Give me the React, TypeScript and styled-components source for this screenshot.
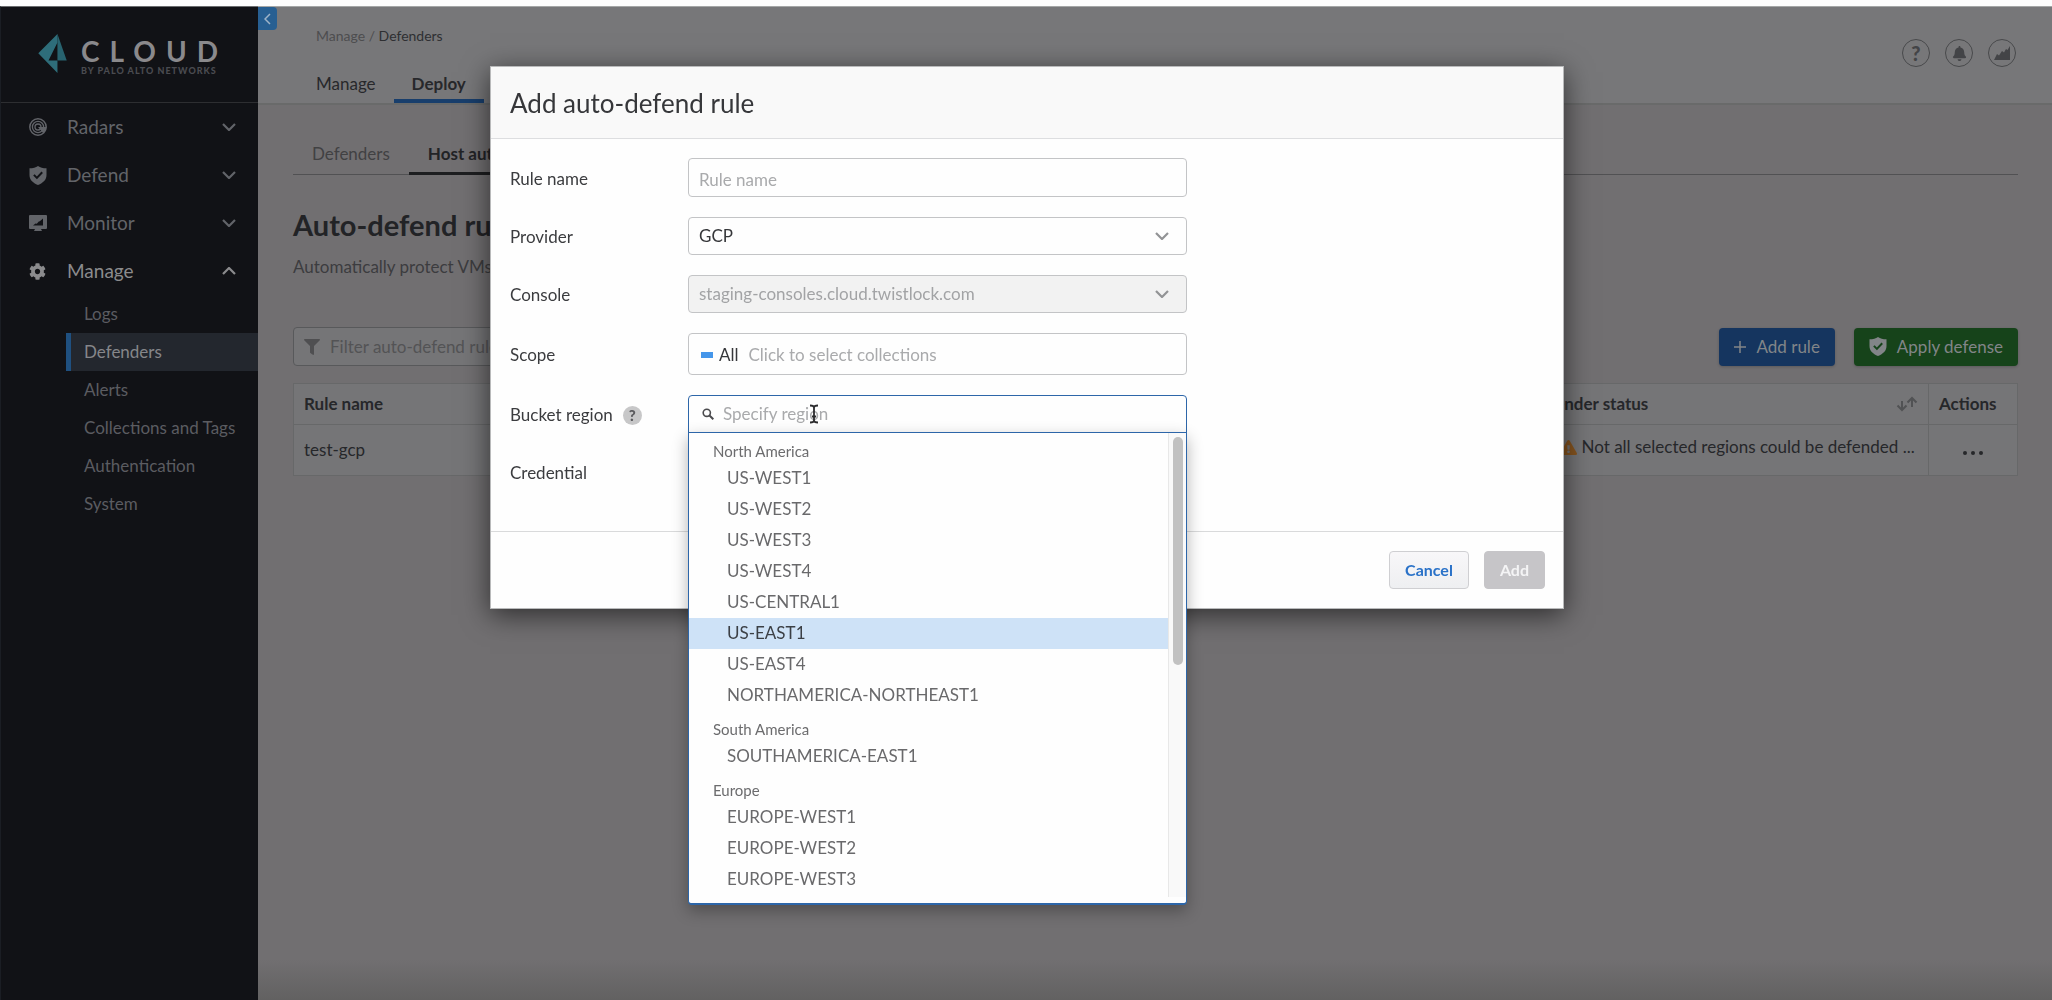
import React from "react";
import styled, { createGlobalStyle, css } from "styled-components";
import { FaFilter, FaExclamationTriangle, FaBell, FaCog } from "react-icons/fa";

const GlobalStyle = createGlobalStyle`
  *, *::before, *::after { box-sizing: border-box; }
  body { margin: 0; background: #716f71; font-family: Lato, "Open Sans", sans-serif; font-size: 17px; line-height: 20px; }
  button, input, select { font: inherit; margin: 0; }
  ul { list-style: none; margin: 0; padding: 0; }
  a { color: inherit; text-decoration: none; }
`;

const Page = styled.div`
  display: flex;
  min-height: 100vh;
  border-top: 6px solid #fdfdfd;
`;

/* ---------- Sidebar ---------- */

const Sidebar = styled.aside`
  flex: 0 0 258px;
  min-width: 0;
  background: #111216;
  border-top: 1px solid #6b6d6f;
  border-left: 1px solid #1b1e24;
`;

const Brand = styled.div`
  display: flex;
  align-items: center;
  gap: 14px;
  height: 96px;
  padding: 0 0 2px 37px;
  border-bottom: 1px solid #2d2e31;
`;

const BrandText = styled.div`
  display: flex;
  flex-direction: column;
  padding-top: 6px;
`;

const BrandName = styled.span`
  color: #8a898c;
  font-size: 28px;
  line-height: 28px;
  font-weight: 700;
  letter-spacing: 10px;
  white-space: nowrap;
`;

const BrandTag = styled.span`
  color: #4a4b50;
  font-size: 9px;
  line-height: 12px;
  font-weight: 900;
  letter-spacing: 1px;
  white-space: nowrap;
`;

const NavButton = styled.button<{ $open?: boolean }>`
  display: grid;
  grid-template-columns: 38px 1fr 14px;
  align-items: center;
  width: 100%;
  height: 48px;
  padding: 0 22px 0 28px;
  border: 0;
  background: none;
  color: ${(p) => (p.$open ? "#8b8b8d" : "#626469")};
  font-size: 19px;
  text-align: left;
  svg { display: block; }
`;

const SubLink = styled.a<{ $active?: boolean }>`
  display: flex;
  align-items: center;
  height: 38px;
  margin-left: 65px;
  padding-left: 13px;
  border-left: 5px solid ${(p) => (p.$active ? "#1f5080" : "transparent")};
  background: ${(p) => (p.$active ? "#23272e" : "transparent")};
  color: ${(p) => (p.$active ? "#85868a" : "#5b5c61")};
  white-space: nowrap;
`;

/* ---------- Main area ---------- */

const Main = styled.main`
  position: relative;
  flex: 1;
  min-width: 0;
  border-top: 1px solid #a4a6a6;
  background: linear-gradient(to top, #626161, #716f71 40px);
`;

const Collapse = styled.button`
  position: absolute;
  top: 0;
  left: 0;
  display: flex;
  align-items: center;
  justify-content: center;
  width: 19px;
  height: 23px;
  padding: 0;
  border: 0;
  border-radius: 0 4px 4px 0;
  background: #275f92;
  color: #9fb4c8;
`;

const Header = styled.header`
  display: flex;
  justify-content: space-between;
  height: 98px;
  padding: 0 36px 0 40px;
  background: #777779;
  border-bottom: 2px solid #696a6a;
`;

const HeaderLeft = styled.div`
  display: flex;
  flex-direction: column;
  justify-content: space-between;
`;

const Breadcrumb = styled.nav`
  padding: 19px 18px 0;
  color: #4d4d4f;
  font-size: 14px;
  span { color: #2e2f32; }
`;

const Tabs = styled.nav`
  display: flex;
`;

const Tab = styled.a<{ $active?: boolean }>`
  padding: 0 18px 5px;
  color: #27282b;
  border-bottom: 4px solid ${(p) => (p.$active ? "#183e6c" : "transparent")};
  font-weight: ${(p) => (p.$active ? 700 : 400)};
`;

const HeaderIcons = styled.div`
  display: flex;
  gap: 15px;
  padding-top: 32px;
`;

const RoundButton = styled.button`
  display: flex;
  align-items: center;
  justify-content: center;
  width: 28px;
  height: 28px;
  padding: 0;
  border: 1px solid #48494b;
  border-radius: 50%;
  background: none;
  color: #434447;
  font-size: 20px;
  font-weight: 900;
`;

const Content = styled.section`
  padding: 39px 34px 40px 35px;
`;

const SubTabs = styled.nav`
  display: flex;
  border-bottom: 1px solid #515153;
`;

const SubTab = styled.a<{ $active?: boolean }>`
  margin-bottom: -1px;
  padding: 0 19px 8px;
  border-bottom: 3px solid ${(p) => (p.$active ? "#1d1e20" : "transparent")};
  color: ${(p) => (p.$active ? "#222326" : "#414143")};
  font-weight: ${(p) => (p.$active ? 700 : 400)};
`;

const Title = styled.h1`
  margin: 30px 0 0;
  color: #222326;
  font-size: 29px;
  line-height: 40px;
  font-weight: 700;
`;

const Lead = styled.p`
  margin: 12px 0 0;
  color: #3c3c3f;
`;

const Toolbar = styled.div`
  display: flex;
  align-items: center;
  gap: 19px;
  margin-top: 50px;
`;

const FilterBox = styled.label`
  display: flex;
  align-items: center;
  gap: 10px;
  width: 560px;
  height: 39px;
  margin-right: auto;
  padding: 0 10px;
  border: 1px solid #58595b;
  border-radius: 4px;
  background: #757577;
  color: #4f4f51;
  input {
    flex: 1;
    min-width: 0;
    padding: 0;
    border: 0;
    outline: 0;
    background: none;
    color: #222326;
  }
  input::placeholder { color: #535355; opacity: 1; }
`;

const ActionButton = styled.button<{ $tone: string }>`
  display: flex;
  align-items: center;
  gap: 10px;
  height: 38px;
  padding: 0 15px;
  border: 0;
  border-radius: 4px;
  background: ${(p) => p.$tone};
  color: #828588;
  box-shadow: 0 1px 3px rgba(0, 0, 0, 0.2);
  white-space: nowrap;
`;

const Table = styled.table`
  width: 100%;
  margin-top: 17px;
  border-collapse: collapse;
  table-layout: fixed;
  background: #757577;
  color: #26272a;
  text-align: left;
  white-space: nowrap;
  tr { border: 1px solid #676869; }
`;

const Th = styled.th<{ $w?: number; $line?: boolean }>`
  width: ${(p) => (p.$w ? `${p.$w}px` : "auto")};
  height: 41px;
  padding: 0 10px;
  font-weight: 700;
  ${(p) => p.$line && css`border-left: 1px solid #676869;`}
`;

const Td = styled.td<{ $line?: boolean; $center?: boolean }>`
  height: 51px;
  padding: 0 10px;
  text-align: ${(p) => (p.$center ? "center" : "left")};
  ${(p) => p.$line && css`border-left: 1px solid #676869;`}
`;

const HeadCell = styled.div`
  display: flex;
  align-items: center;
  justify-content: space-between;
`;

const Status = styled.div`
  display: flex;
  align-items: center;
  gap: 5px;
  padding: 0 0 6px 32px;
  svg { flex: none; color: #87551f; }
`;

const MoreButton = styled.button`
  padding: 0 0 4px;
  border: 0;
  background: none;
  color: #26272a;
  svg { display: block; }
`;

/* ---------- Dialog ---------- */

const Layer = styled.div`
  position: fixed;
  inset: 0;
  display: flex;
  justify-content: center;
  align-items: flex-start;
  padding: 66px 24px 66px 26px;
`;

const Dialog = styled.section`
  width: 1074px;
  max-width: 100%;
  background: #fefefe;
  border: 1px solid #b9babb;
  box-shadow: 0 6px 26px rgba(0, 0, 0, 0.6);
`;

const DialogHead = styled.h2`
  margin: 0;
  padding: 18px 19px 16px;
  border-bottom: 1px solid #dddee0;
  background: #f9f9f9;
  color: #36373a;
  font-size: 26px;
  line-height: 37px;
  font-weight: 400;
`;

const Form = styled.form`
  display: flex;
  flex-direction: column;
  gap: 20px;
  padding: 19px 19px 40px;
`;

const Field = styled.div`
  display: grid;
  grid-template-columns: 178px minmax(0, 499px);
  align-items: center;
  min-height: 38px;
`;

const Label = styled.label`
  display: flex;
  align-items: center;
  gap: 10px;
  padding-top: 2px;
  color: #3b3c3f;
`;

const Help = styled.span`
  display: inline-flex;
  align-items: center;
  justify-content: center;
  width: 19px;
  height: 19px;
  border-radius: 50%;
  background: #c7c7c8;
  color: #5b5b5e;
  font-size: 15px;
  font-weight: 900;
`;

const control = css`
  width: 100%;
  border: 1px solid #c3c4c6;
  border-radius: 4px;
  background: #fefefe;
  color: #36373a;
  outline: 0;
`;

const TextInput = styled.input`
  ${control}
  height: 39px;
  padding: 3px 10px 0;
  &::placeholder { color: #a9aaac; opacity: 1; }
`;

const SelectWrap = styled.div`
  position: relative;
  svg {
    position: absolute;
    top: 15px;
    right: 18px;
    pointer-events: none;
  }
`;

const Select = styled.select`
  ${control}
  display: block;
  height: 38px;
  padding: 0 40px 0 10px;
  appearance: none;
  &:disabled {
    background: #f2f2f2;
    color: #a2a3a5;
    opacity: 1;
  }
`;

const BareInput = styled.input`
  flex: 1;
  min-width: 0;
  padding: 0;
  border: 0;
  outline: 0;
  background: none;
  &::placeholder { color: #a9aaac; opacity: 1; }
`;

const ScopeBox = styled.div`
  ${control}
  display: flex;
  align-items: center;
  height: 42px;
  padding: 2px 12px 0;
`;

const Swatch = styled.i`
  width: 12px;
  height: 6px;
  margin-right: 6px;
  background: #4596ea;
`;

const Tag = styled.span`
  margin-right: 10px;
`;

const Combo = styled.div`
  position: relative;
`;

const SearchBox = styled.div`
  ${control}
  display: flex;
  align-items: center;
  gap: 9px;
  height: 38px;
  padding: 0 13px;
  border-color: #2d66a9;
  border-radius: 4px 4px 0 0;
`;

const TextCursor = styled.svg`
  position: absolute;
  top: 9px;
  left: 120px;
`;

const Menu = styled.div`
  position: absolute;
  z-index: 2;
  top: 37px;
  left: 0;
  right: 0;
  display: flex;
  height: 473px;
  padding-bottom: 6px;
  border: 1px solid #2d66a9;
  border-bottom-width: 2px;
  border-radius: 0 0 4px 4px;
  background: #fefefe;
  box-shadow: 0 6px 16px rgba(0, 0, 0, 0.3);
`;

const Options = styled.div`
  flex: 1;
  overflow: hidden;
`;

const Group = styled.div`
  padding: 7px 0 1px 24px;
  color: #6c6c6e;
  font-size: 15px;
  line-height: 22px;
`;

const Option = styled.li<{ $hover?: boolean }>`
  padding: 0 0 1px 38px;
  line-height: 30px;
  background: ${(p) => (p.$hover ? "#cee2f7" : "transparent")};
  color: ${(p) => (p.$hover ? "#3b3f45" : "#69696b")};
`;

const Track = styled.div`
  width: 18px;
  padding: 4px 3px 0 4px;
  border-left: 1px solid #e8e8e8;
  background: #f9f9f9;
`;

const Thumb = styled.div`
  width: 10px;
  height: 228px;
  border-radius: 5px;
  background: #c1c1c1;
`;

const DialogFoot = styled.footer`
  display: flex;
  justify-content: flex-end;
  gap: 15px;
  padding: 19px 18px;
  border-top: 1px solid #d9dadb;
`;

const FootButton = styled.button`
  height: 38px;
  padding: 0 15px;
  border: 1px solid #cfcfd2;
  border-radius: 4px;
  background: linear-gradient(#f8f7f9, #eeeff1);
  color: #2a72c8;
  font-size: 16px;
  font-weight: 700;
  &:disabled {
    border-color: #c6c5c8;
    background: #c6c5c8;
    color: #f4f4f5;
  }
`;

/* ---------- Drawings ---------- */

const Chevron = ({ up, color = "currentColor", w = 14 }: { up?: boolean; color?: string; w?: number }) => (
  <svg width={w} height="8" viewBox="0 0 14 8" fill="none" stroke={color} strokeWidth="2.2">
    <path d={up ? "M1 7l6-6 6 6" : "M1 1l6 6 6-6"} />
  </svg>
);

const ShieldIcon = ({ hole }: { hole: string }) => (
  <svg width="18" height="19" viewBox="0 0 18 19">
    <path fill="currentColor" d="M9 0c2.200 1.700 5 2.300 8.500 2.300V9c0 4.600-3.200 7.900-8.500 10C3.700 16.900.5 13.600.5 9V2.300C4 2.300 6.800 1.700 9 0z" />
    <path fill="none" stroke={hole} strokeWidth="2" d="M4.900 8.900l3 3 5.300-5.600" />
  </svg>
);

const RadarIcon = () => (
  <svg width="18" height="18" viewBox="0 0 18 18">
    <circle cx="9" cy="9" r="8.200" fill="none" stroke="currentColor" strokeWidth="1.500" />
    <circle cx="9" cy="9" r="5.600" fill="none" stroke="currentColor" strokeWidth="1.300" />
    <circle cx="9" cy="9" r="3" fill="none" stroke="currentColor" strokeWidth="1.300" />
    <path d="M9 9h8.500a8.500 8.500 0 0 1-3.200 6.300z" fill="currentColor" />
  </svg>
);

const MonitorIcon = () => (
  <svg width="18" height="17" viewBox="0 0 18 17">
    <path fill="currentColor" fillRule="evenodd" d="M1 0h16a1 1 0 0 1 1 1v12a1 1 0 0 1-1 1h-5l1 2H5l1-2H1a1 1 0 0 1-1-1V1a1 1 0 0 1 1-1zM4 10.500h10V3.500l-3.200 2.800-1 .2-2 2.300-1.300-.4z" />
  </svg>
);

const BrandMark = () => (
  <svg width="29" height="39" viewBox="114 100 86 118">
    <path fill="#2e6d7a" fillRule="evenodd" d="M172 100L114 158L172 218V180H145L172 126z" />
    <path fill="#28636f" d="M172 100L200 180H172z" />
  </svg>
);

const ChartIcon = () => (
  <svg width="16" height="14" viewBox="0 0 16 14">
    <path fill="currentColor" d="M0 14l3-6 2 1.500L8 5l2 1.500L12 3l1.500 1L16 0v14z" />
  </svg>
);

const SearchIcon = () => (
  <svg width="12" height="12" viewBox="0 0 12 12" fill="none" stroke="#4b4b4e">
    <circle cx="4.800" cy="4.800" r="3.600" strokeWidth="1.600" />
    <path d="M7.500 7.500l3.800 3.800" strokeWidth="2" />
  </svg>
);

const SortIcon = () => (
  <svg width="22" height="16" viewBox="0 0 22 16" fill="none" stroke="#515254" strokeWidth="2">
    <path d="M6 5v9M1.500 9.500L6 14l4.500-4.500M16 11V2M11.500 6.500L16 2l4.500 4.500" />
  </svg>
);

/* ---------- Data ---------- */

const sections = [
  { name: "Radars", icon: <RadarIcon /> },
  { name: "Defend", icon: <ShieldIcon hole="#111216" /> },
  { name: "Monitor", icon: <MonitorIcon /> },
  { name: "Manage", icon: <FaCog size={17} />, open: true },
];

const links = ["Logs", "Defenders", "Alerts", "Collections and Tags", "Authentication", "System"];

const regions = [
  {
    group: "North America",
    items: ["US-WEST1", "US-WEST2", "US-WEST3", "US-WEST4", "US-CENTRAL1", "US-EAST1", "US-EAST4", "NORTHAMERICA-NORTHEAST1"],
  },
  { group: "South America", items: ["SOUTHAMERICA-EAST1"] },
  { group: "Europe", items: ["EUROPE-WEST1", "EUROPE-WEST2", "EUROPE-WEST3"] },
];

export default function App() {
  return (
    <>
      <GlobalStyle />
      <Page>
        <Sidebar>
          <Brand>
            <BrandMark />
            <BrandText>
              <BrandName>CLOUD</BrandName>
              <BrandTag>BY PALO ALTO NETWORKS</BrandTag>
            </BrandText>
          </Brand>
          <nav aria-label="Primary">
            {sections.map((s) => (
              <NavButton key={s.name} $open={s.open} aria-expanded={!!s.open}>
                {s.icon}
                <span>{s.name}</span>
                <Chevron up={s.open} />
              </NavButton>
            ))}
            {links.map((l) => (
              <SubLink key={l} href="#" $active={l === "Defenders"}>{l}</SubLink>
            ))}
          </nav>
        </Sidebar>

        <Main>
          <Header>
            <HeaderLeft>
              <Breadcrumb aria-label="Breadcrumb">
                <a href="#">Manage</a> / <span>Defenders</span>
              </Breadcrumb>
              <Tabs>
                <Tab href="#">Manage</Tab>
                <Tab href="#" $active>Deploy</Tab>
              </Tabs>
            </HeaderLeft>
            <HeaderIcons>
              <RoundButton aria-label="Help">?</RoundButton>
              <RoundButton aria-label="Notifications"><FaBell size={15} /></RoundButton>
              <RoundButton aria-label="Usage"><ChartIcon /></RoundButton>
            </HeaderIcons>
          </Header>
          <Collapse aria-label="Collapse sidebar">
            <svg width="7" height="12" viewBox="0 0 7 12" fill="none" stroke="currentColor" strokeWidth="1.500">
              <path d="M6 1L1 6l5 5" />
            </svg>
          </Collapse>

          <Content>
            <SubTabs>
              <SubTab href="#">Defenders</SubTab>
              <SubTab href="#" $active>Host auto-defend</SubTab>
            </SubTabs>
            <Title>Auto-defend rules</Title>
            <Lead>Automatically protect VMs</Lead>
            <Toolbar>
              <FilterBox>
                <FaFilter size={16} />
                <input aria-label="Filter rules" placeholder="Filter auto-defend rules" />
              </FilterBox>
              <ActionButton $tone="#15355f">
                <svg width="12" height="12" viewBox="0 0 12 12" stroke="currentColor" strokeWidth="1.500">
                  <path d="M6 0v12M0 6h12" />
                </svg>
                Add rule
              </ActionButton>
              <ActionButton $tone="#16431a">
                <ShieldIcon hole="#16431a" />
                Apply defense
              </ActionButton>
            </Toolbar>
            <Table>
              <thead>
                <tr>
                  <Th>Rule name</Th>
                  <Th $w={411}>
                    <HeadCell>Defender status<SortIcon /></HeadCell>
                  </Th>
                  <Th $w={89} $line>Actions</Th>
                </tr>
              </thead>
              <tbody>
                <tr>
                  <Td>test-gcp</Td>
                  <Td>
                    <Status>
                      <FaExclamationTriangle size={17} />
                      Not all selected regions could be defended ...
                    </Status>
                  </Td>
                  <Td $line $center>
                    <MoreButton aria-label="More actions">
                      <svg width="68" height="6" viewBox="0 0 68 6" fill="currentColor">
                        <circle cx="26" cy="3" r="2" /><circle cx="34" cy="3" r="2" /><circle cx="42" cy="3" r="2" />
                      </svg>
                    </MoreButton>
                  </Td>
                </tr>
              </tbody>
            </Table>
          </Content>
        </Main>
      </Page>

      <Layer>
        <Dialog role="dialog" aria-modal="true" aria-labelledby="dialog-title">
          <DialogHead id="dialog-title">Add auto-defend rule</DialogHead>
          <Form id="rule-form">
            <Field>
              <Label htmlFor="rule-name">Rule name</Label>
              <TextInput id="rule-name" placeholder="Rule name" />
            </Field>
            <Field>
              <Label htmlFor="provider">Provider</Label>
              <SelectWrap>
                <Select id="provider" defaultValue="GCP">
                  <option>GCP</option>
                </Select>
                <Chevron color="#929395" />
              </SelectWrap>
            </Field>
            <Field>
              <Label htmlFor="console">Console</Label>
              <SelectWrap>
                <Select id="console" disabled>
                  <option>staging-consoles.cloud.twistlock.com</option>
                </Select>
                <Chevron color="#929395" />
              </SelectWrap>
            </Field>
            <Field>
              <Label htmlFor="scope">Scope</Label>
              <ScopeBox>
                <Swatch />
                <Tag>All</Tag>
                <BareInput id="scope" placeholder="Click to select collections" />
              </ScopeBox>
            </Field>
            <Field>
              <Label htmlFor="region">Bucket region <Help>?</Help></Label>
              <Combo>
                <SearchBox>
                  <SearchIcon />
                  <BareInput id="region" role="combobox" aria-expanded="true" aria-controls="region-list" placeholder="Specify region" />
                </SearchBox>
                <TextCursor width="12" height="20" viewBox="0 0 12 20" fill="none" stroke="#2b2b2d" strokeWidth="1.800">
                  <path d="M2 1.500c2 0 4 .5 4 2v13c0 1.500-2 2-4 2M10 1.500c-2 0-4 .5-4 2M10 18.500c-2 0-4-.5-4-2M4 12.500h4" />
                </TextCursor>
                <Menu>
                  <Options id="region-list" role="listbox" aria-label="Regions">
                    {regions.map((r) => (
                      <div key={r.group} role="group" aria-label={r.group}>
                        <Group>{r.group}</Group>
                        <ul role="presentation">
                          {r.items.map((i) => (
                            <Option key={i} role="option" aria-selected={i === "US-EAST1"} $hover={i === "US-EAST1"}>{i}</Option>
                          ))}
                        </ul>
                      </div>
                    ))}
                  </Options>
                  <Track><Thumb /></Track>
                </Menu>
              </Combo>
            </Field>
            <Field>
              <Label as="span">Credential</Label>
            </Field>
          </Form>
          <DialogFoot>
            <FootButton type="button">Cancel</FootButton>
            <FootButton type="submit" form="rule-form" disabled>Add</FootButton>
          </DialogFoot>
        </Dialog>
      </Layer>
    </>
  );
}
